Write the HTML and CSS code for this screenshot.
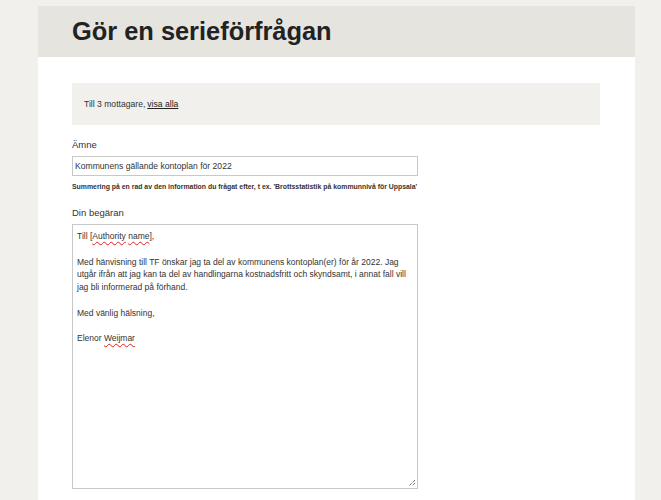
FILE: index.html
```html
<!DOCTYPE html>
<html lang="sv">
<head>
<meta charset="utf-8">
<title>Gör en serieförfrågan</title>
<link rel="stylesheet" href="styles.css">
</head>
<body>
<div class="page">
  <header class="page-header">
    <h1 class="title">Gör en serieförfrågan</h1>
  </header>
  <main class="content">
    <div class="recipients">Till 3 mottagare, <a href="#" class="link">visa alla</a></div>

    <div class="field">
      <label class="label">Ämne</label>
      <div class="input">Kommunens gällande kontoplan för 2022</div>
      <p class="hint">Summering på en rad av den information du frågat efter, t ex. 'Brottsstatistik på kommunnivå för Uppsala'</p>
    </div>

    <div class="field">
      <label class="label">Din begäran</label>
      <div class="textarea">
        <p class="para">Till [<span class="spell">Authority</span> <span class="spell">name</span>],</p>
        <p class="para">Med hänvisning till TF önskar jag ta del av kommunens kontoplan(er) för år 2022. Jag<br>utgår ifrån att jag kan ta del av handlingarna kostnadsfritt och skyndsamt, i annat fall vill<br>jag bli informerad på förhand.</p>
        <p class="para">Med vänlig hälsning,</p>
        <p class="para">Elenor <span class="spell">Weijmar</span></p>
        <svg class="grip" width="8" height="8" viewBox="0 0 8 8"><path d="M7 1 L1 7 M7 4 L4 7" stroke="#333" stroke-width="1" stroke-dasharray="1 1" fill="none"/></svg>
      </div>
    </div>
  </main>
</div>
</body>
</html>
```

FILE: styles.css
```css
html, body {
  margin: 0;
  padding: 0;
  background: #f1f0ec;
  font-family: "Liberation Sans", Arial, sans-serif;
  color: #333;
}
.page {
  margin: 6px 0 0 38px;
  width: 597px;
  background: #fff;
  min-height: 494px;
}
.page-header {
  background: #e5e4df;
  height: 51px;
  padding-left: 34px;
  box-sizing: border-box;
  display: flex;
  align-items: center;
}
.title {
  margin: 0;
  font-size: 25.4px;
  font-weight: bold;
  color: #222;
}
.content {
  padding: 26px 35px 0 34px;
}
.recipients {
  background: #f1f0ec;
  height: 42px;
  box-sizing: border-box;
  padding-left: 12px;
  display: flex;
  align-items: center;
  font-size: 8.6px;
  color: #333;
}
.link {
  color: #222;
  margin-left: 2px;
  text-decoration: underline;
}
.field {
  margin-top: 13px;
}
.label {
  display: block;
  font-size: 9.5px;
  line-height: 13px;
  color: #333;
  margin-bottom: 5px;
}
.input {
  width: 346px;
  height: 20px;
  box-sizing: border-box;
  border: 1px solid #c8c8c8;
  padding: 0 2px;
  font-size: 8.6px;
  line-height: 18px;
  color: #333;
}
.hint {
  margin: 6px 0 0;
  font-size: 6.9px;
  line-height: 9px;
  font-weight: bold;
  color: #333;
  white-space: nowrap;
}
.field + .field {
  margin-top: 15px;
}
.textarea {
  position: relative;
  width: 346px;
  height: 265px;
  box-sizing: border-box;
  border: 1px solid #c8c8c8;
  padding: 5px 4px;
  font-size: 8.5px;
  line-height: 12.75px;
  color: #333;
}
.para {
  margin: 0 0 12.75px;
  white-space: nowrap;
}
.spell {
  text-decoration: underline wavy #e02020;
  text-decoration-thickness: 1px;
  text-underline-offset: 2px;
}
.grip {
  position: absolute;
  right: 1px;
  bottom: 1px;
}
```
